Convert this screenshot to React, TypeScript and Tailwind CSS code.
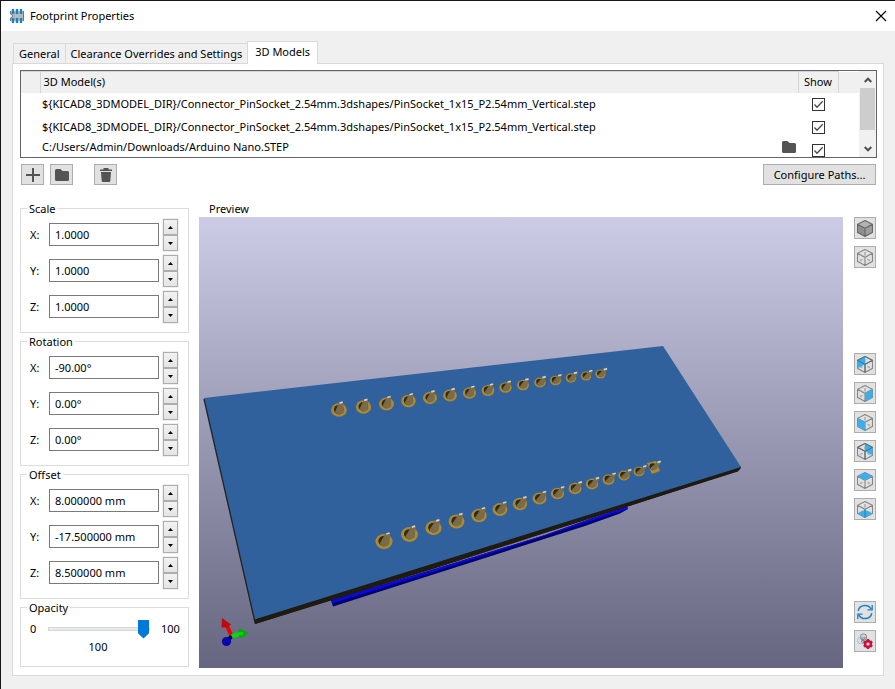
import { useState, type ReactNode } from "react";

const models = [
  { path: "${KICAD8_3DMODEL_DIR}/Connector_PinSocket_2.54mm.3dshapes/PinSocket_1x15_P2.54mm_Vertical.step", browse: false },
  { path: "${KICAD8_3DMODEL_DIR}/Connector_PinSocket_2.54mm.3dshapes/PinSocket_1x15_P2.54mm_Vertical.step", browse: false },
  { path: "C:/Users/Admin/Downloads/Arduino Nano.STEP", browse: true },
];

function FolderIcon() {
  return (
    <svg width="14" height="12" viewBox="0 0 14 12" fill="#545454" aria-hidden="true">
      <path d="M1.5 0h4L7.5 2H12.500Q14 2 14 3.500V10.500Q14 12 12.500 12H1.500Q0 12 0 10.500V1.500Q0 0 1.500 0Z" />
    </svg>
  );
}

function FootprintIcon() {
  return (
    <svg width="14" height="14" viewBox="0 0 14 14" aria-hidden="true">
      <path d="M0 2h14v10H0V9a2 2 0 0 0 0-4Z" fill="#b4b9be" />
      <path d="M.5 2v3a2 2 0 0 1 0 4v3M13.500 2v10" fill="none" stroke="#6d7378" />
      <path d="M3 0v5M7 0v5M11 0v5M3 9v5M7 9v5M11 9v5" stroke="#1a81c4" strokeWidth="2.400" />
    </svg>
  );
}

function ToolButton({ label, className, children }: { label: string; className: string; children: ReactNode }) {
  return (
    <button
      type="button"
      aria-label={label}
      className={`flex shrink-0 items-center justify-center border border-[#adadad] bg-[#e1e1e1] ${className}`}
    >
      {children}
    </button>
  );
}

function Check({ label }: { label: string }) {
  return (
    <label className="mx-auto grid size-[13px]">
      <input
        type="checkbox"
        defaultChecked
        aria-label={label}
        className="peer col-start-1 row-start-1 size-[13px] appearance-none border border-[#333] bg-white"
      />
      <svg
        viewBox="0 0 13 13"
        className="pointer-events-none invisible col-start-1 row-start-1 size-[13px] peer-checked:visible"
        fill="none"
        stroke="#4a4a4a"
        strokeWidth="1.300"
      >
        <path d="M2.500 6.500 5 9.300 10.700 3.200" />
      </svg>
    </label>
  );
}

function SpinRow({ group, axis, value }: { group: string; axis: string; value: string }) {
  const id = `${group}-${axis}`;
  const spin =
    "flex h-4 w-[15px] items-center justify-center border border-[#adadad] bg-gradient-to-b from-[#f2f2f2] to-[#e4e4e4]";
  return (
    <div className="flex h-8">
      <label htmlFor={id} className="w-[19px] leading-8">
        {axis}:
      </label>
      <input
        id={id}
        defaultValue={value}
        className="mt-1 h-[23px] w-0 min-w-0 grow border border-[#7a7a7a] bg-white px-[5px] pb-px outline-none"
      />
      <div className="ml-1 flex flex-col ring-1 ring-[#f0f0f0]">
        <button type="button" aria-label={`Increase ${group} ${axis}`} className={spin}>
          <svg width="5" height="3" viewBox="0 0 5 3">
            <path d="M0 3 2.500 0 5 3Z" />
          </svg>
        </button>
        <button type="button" aria-label={`Decrease ${group} ${axis}`} className={spin}>
          <svg width="5" height="3" viewBox="0 0 5 3">
            <path d="M0 0h5L2.500 3Z" />
          </svg>
        </button>
      </div>
    </div>
  );
}

function Group({ title, values }: { title: string; values: string[] }) {
  return (
    <fieldset className="min-w-0 border border-[#dcdcdc] pr-[10px] pb-[9px] pl-[9px]">
      <legend className="ml-[-3px] h-4 px-0.5 leading-[18px]">{title}</legend>
      <div className="flex flex-col gap-1 pt-[3px]">
        {["X", "Y", "Z"].map((axis, i) => (
          <SpinRow key={axis} group={title} axis={axis} value={values[i]} />
        ))}
      </div>
    </fieldset>
  );
}

function OpacityGroup() {
  const [opacity, setOpacity] = useState(100);
  return (
    <fieldset className="min-w-0 border border-[#dcdcdc] pr-[8px] pb-[11px] pl-[9px]">
      <legend className="ml-[-3px] h-4 px-0.5 leading-[18px]">Opacity</legend>
      <div className="flex h-6 items-center pt-[3px]">
        <span className="w-[18px]">0</span>
        <input
          type="range"
          aria-label="Opacity"
          min={0}
          max={100}
          value={opacity}
          onChange={(e) => setOpacity(Number(e.target.value))}
          className="h-[19px] w-0 min-w-0 grow appearance-none bg-transparent [&::-webkit-slider-runnable-track]:h-1 [&::-webkit-slider-runnable-track]:border [&::-webkit-slider-runnable-track]:border-[#d6d6d6] [&::-webkit-slider-runnable-track]:bg-[#e7eaea] [&::-webkit-slider-thumb]:mt-[-8px] [&::-webkit-slider-thumb]:h-[19px] [&::-webkit-slider-thumb]:w-[11px] [&::-webkit-slider-thumb]:appearance-none [&::-webkit-slider-thumb]:bg-[#0078d7] [&::-webkit-slider-thumb]:[clip-path:polygon(0_0,100%_0,100%_72%,50%_100%,0_72%)]"
        />
        <span className="w-[30px] pl-[11px]">100</span>
      </div>
      <output className="block w-[136px] text-center leading-4">{opacity}</output>
    </fieldset>
  );
}

const faces = {
  none: "",
  backLeft: "M8 .5 .5 4.300V12.300L8 8.300Z",
  right: "M8 8.300 15.500 4.300V12.300L8 16.500Z",
  left: "M8 8.300 .5 4.300V12.300L8 16.500Z",
  backRight: "M8 .5 15.500 4.300V12.300L8 8.300Z",
  top: "M8 .5 15.500 4.300 8 8.300 .5 4.300Z",
  bottom: "M8 8.800 15.500 12.300 8 16.500 .5 12.300Z",
};

function Cube({ face, shaded = false }: { face: keyof typeof faces; shaded?: boolean }) {
  return (
    <svg width="16" height="17" viewBox="0 0 16 17" fill="none" aria-hidden="true">
      {shaded && (
        <>
          <path d={faces.top} fill="#b3b3b3" />
          <path d={faces.left} fill="#8f8f8f" />
          <path d={faces.right} fill="#9d9d9d" />
        </>
      )}
      {!shaded && <path d="M8 3v3.500M3 11.700 5.500 10.300M13 11.700 10.500 10.300" stroke="#ababab" strokeWidth="1.500" />}
      <path
        d="M8 .5 15.500 4.300V12.300L8 16.500 .5 12.300V4.300ZM.5 4.300 8 8.300 15.500 4.300M8 8.300V16.500"
        stroke={shaded ? "#666" : "#868686"}
        strokeWidth="1.100"
      />
      <path d={faces[face]} fill="#39b0ec" />
      {(face === "backLeft" || face === "backRight") && (
        <path d="M8 .5 .5 4.300 8 8.300 15.500 4.300 8 .5M8 8.300V16.500" stroke="#4f6b7a" strokeWidth="1" />
      )}
      {face === "bottom" && <path d="M8 8.300V16.500" stroke="#2c81ad" strokeWidth="1" />}
    </svg>
  );
}

function RefreshIcon() {
  return (
    <svg width="16" height="16" viewBox="0 0 16 16" fill="none" stroke="#1a81c4" strokeWidth="1.500" aria-hidden="true">
      <path d="M1.200 6.800C1.800 3.600 4.600 1.400 8 1.400c2.800 0 5 1.500 6.200 3.800" />
      <path d="M14.800 9.200c-.6 3.200-3.400 5.400-6.800 5.400-2.800 0-5-1.500-6.200-3.800" />
      <path d="M15.200 1v4.800h-4.700M.8 15v-4.800h4.700" strokeWidth="1.300" />
    </svg>
  );
}

function SettingsIcon() {
  return (
    <svg width="16" height="16" viewBox="0 0 16 16" fill="none" aria-hidden="true">
      <circle cx="6.500" cy="4" r="3.200" fill="#cfcfcf" stroke="#8b8b8b" />
      <circle cx="3.800" cy="7.500" r="3.200" stroke="#86c2e4" />
      <circle cx="7.500" cy="7.500" r="3" stroke="#9a9a9a" />
      <path d="M4 5.500 8 9M8 5 4 9" stroke="#777" strokeWidth=".8" />
      <circle cx="11" cy="11" r="2.900" stroke="#c8143c" strokeWidth="2.600" fill="#f3e3e6" />
      <path
        d="M11 6v1.600M11 14.400V16M6.700 8.500l1.400.8M13.900 12.700l1.400.8M6.700 13.500l1.400-.8M13.900 9.300l1.400-.8"
        stroke="#c8143c"
        strokeWidth="2.400"
      />
    </svg>
  );
}

// Pad centres of each socket row: x, y, ring radius
const upperPins = [
  [339, 410, 7.8], [363.5, 407, 7.6], [386.500, 404, 7.4], [408.500, 401, 7.2], [430, 398, 7], [450, 395.500, 6.8],
  [469.500, 393, 6.6], [488, 390.500, 6.3], [505.500, 387.500, 6.1], [523, 385, 5.900], [540, 382.500, 5.700],
  [555.500, 380.500, 5.500], [571, 378, 5.300], [586, 376, 5.200], [600.500, 374, 5.100],
];
const lowerPins = [
  [384, 541.5, 8.6], [409.5, 534.5, 8.4], [433.5, 528, 8.1], [456.5, 521.5, 7.900], [479, 515.500, 7.700],
  [500, 509.500, 7.400], [520, 504, 7.100], [539.500, 498.500, 6.900], [557.500, 493.500, 6.600], [575, 488.500, 6.400],
  [592, 484, 6.200], [608.500, 479.500, 6], [624, 475.500, 5.700], [639, 471.500, 5.500],
];

function Pin({ x, y, r, lean, square = false }: { x: number; y: number; r: number; lean: number; square?: boolean }) {
  const tipX = x + lean;
  const tipY = y - r * 0.9;
  const top = r * 0.22;
  const base = r * 0.45;
  return (
    <g>
      {square ? (
        <path d={`M${x - 6} ${y - 4}l9-2 4 10-8 3Z`} fill="#ab8b32" />
      ) : (
        <ellipse cx={x} cy={y} rx={r} ry={r * 0.88} fill="#ab8b32" />
      )}
      <ellipse cx={x - 0.3} cy={y - 0.5} rx={r * 0.62} ry={r * 0.58} fill="#33290f" />
      <path
        d={`M${tipX - top} ${tipY}L${tipX + top} ${tipY + 0.4}L${x + base + 0.8} ${y + r * 0.35}L${x - 0.5} ${y + r * 0.6}L${x - base} ${y + r * 0.25}Z`}
        fill="#7c6b48"
        stroke="#7c6b48"
        strokeWidth="1"
      />
      <path d={`M${tipX - 1.6} ${tipY + 0.2}l3.400-1`} stroke="#ddd0b2" strokeWidth="1.700" />
    </g>
  );
}

function Preview() {
  return (
    <svg viewBox="199 217 644 451" className="block size-full" role="img" aria-label="3D preview">
      <path d="M203.500 398 254 619 740 466 741 468 738 471.500 255 624Z" fill="#1f1b10" />
      <path d="M331 600 430 570.500 545 535 590 519 627 506.500 628 509 620 513.500 585 526 333 606.500Z" fill="#00006c" />
      <path d="M331 600 430 570.500 545 535 590 519 627 506.500 628 509 585 523 430 573 332 603.500Z" fill="#0808e0" />
      <path d="M254 620.500 738 468.500 738 470.500 625 507.500 545 533 430 570 255 624Z" fill="#1f1b10" />
      <path d="M204 398 663 346 741 467 254.500 619.500Z" fill="#31619d" />
      <path d="M204 399 254.500 620" stroke="#1f2420" strokeWidth="1.300" />
      {upperPins.map(([x, y, r], i) => (
        <Pin key={x} x={x} y={y} r={r} lean={2 + i * 0.2} />
      ))}
      {lowerPins.map(([x, y, r], i) => (
        <Pin key={x} x={x} y={y} r={r} lean={3.8 + i * 0.15} />
      ))}
      <Pin x={653} y={467} r={5.4} lean={6} square />

      <path d="M231.500 636 226 643" stroke="#05055e" strokeWidth="4" />
      <circle cx="226.500" cy="641.500" r="4.600" fill="#0808a8" />
      <path d="M231 634.500 226.500 625" stroke="#ee0000" strokeWidth="4" />
      <path d="M222 618 231 624.500 227 627.500 221.500 627.500Z" fill="#bd0a0a" />
      <path d="M232 636 241 633.700" stroke="#00e000" strokeWidth="4" />
      <path d="M238.500 629 242 629.500 248.500 633 242 638 239 637.500Z" fill="#06a906" />
      <path d="M239 633.500h4" stroke="#00d800" strokeWidth="3" />
    </svg>
  );
}

const views: { label: string; face: keyof typeof faces }[] = [
  { label: "View left", face: "backLeft" },
  { label: "View right", face: "right" },
  { label: "View front", face: "left" },
  { label: "View back", face: "backRight" },
  { label: "View top", face: "top" },
  { label: "View bottom", face: "bottom" },
];

export default function App() {
  return (
    <div className="flex min-h-screen flex-col border-t border-l border-[#17171a] bg-[#f0f0f0] font-['Noto_Sans',sans-serif] text-[11px] leading-4 text-black">
      <header className="flex h-[30px] shrink-0 items-center bg-white pr-2 pl-[9px]">
        <FootprintIcon />
        <h1 className="ml-1.5 grow">Footprint Properties</h1>
        <button type="button" aria-label="Close">
          <svg width="12" height="12" viewBox="0 0 12 12" stroke="#000" strokeWidth="1.100">
            <path d="M1 1 11 11M11 1 1 11" />
          </svg>
        </button>
      </header>

      <main className="flex grow flex-col pt-2.5 pr-[11px] pb-[13px] pl-[11px]">
        <div role="tablist" className="flex items-end">
          <button type="button" role="tab" aria-selected="false" className="ml-px h-5 border border-b-0 border-[#d9d9d9] px-[5px]">
            General
          </button>
          <button type="button" role="tab" aria-selected="false" className="h-5 border border-x-0 border-b-0 border-[#d9d9d9] px-[5px]">
            Clearance Overrides and Settings
          </button>
          <button type="button" role="tab" aria-selected="true" className="z-10 -mb-px h-[23px] border border-b-0 border-[#d9d9d9] bg-white px-[7px] pb-0.5">
            3D Models
          </button>
        </div>

        <section className="flex grow flex-col border border-[#d9d9d9] bg-white pt-1.5 pr-1.5 pb-[7px] pl-[7px]">
          <div className="flex h-[88px] border border-[#646464]">
            <div className="grow overflow-hidden">
              <table className="w-full table-fixed border-collapse text-left">
                <thead>
                  <tr className="h-[21px] bg-[#f0f0f0]">
                    <th className="w-[19px] border-t border-r border-[#d4d4d4] p-0" />
                    <th className="border-t border-r border-[#d4d4d4] p-0 pl-[3px] font-normal">3D Model(s)</th>
                    <th className="w-10 border-t border-r border-[#d4d4d4] p-0 text-center font-normal">Show</th>
                    <th className="w-[21px] p-0" />
                  </tr>
                </thead>
                <tbody>
                  {models.map((m, i) => (
                    <tr key={i} className="h-[23px]">
                      <td className="p-0" />
                      <td className={m.browse ? "p-0 pl-[2px] align-top" : "p-0 pl-[2px]"}>
                        <div className="flex items-center justify-between pr-0.5">
                          <span className="whitespace-nowrap">{m.path}</span>
                          {m.browse && (
                            <button type="button" aria-label="Browse for model">
                              <FolderIcon />
                            </button>
                          )}
                        </div>
                      </td>
                      <td className="p-0">
                        <Check label={`Show model ${i + 1}`} />
                      </td>
                      <td className="p-0" />
                    </tr>
                  ))}
                </tbody>
              </table>
            </div>
            <div className="flex w-[17px] shrink-0 flex-col bg-[#f0f0f0] px-px">
              <button type="button" aria-label="Scroll up" className="flex h-[17px] shrink-0 items-center justify-center">
                <svg width="8" height="6" viewBox="0 0 8 6" fill="none" stroke="#505050" strokeWidth="2">
                  <path d="M.7 5 4 1.700 7.300 5" />
                </svg>
              </button>
              <div className="h-[42px] bg-[#cdcdcd]" />
              <button type="button" aria-label="Scroll down" className="mt-auto flex h-[17px] shrink-0 items-center justify-center">
                <svg width="8" height="6" viewBox="0 0 8 6" fill="none" stroke="#505050" strokeWidth="2">
                  <path d="M.7 1 4 4.300 7.300 1" />
                </svg>
              </button>
            </div>
          </div>

          <div className="mt-1.5 flex items-center pr-px pl-px">
            <ToolButton label="Add model" className="h-[21px] w-[23px]">
              <svg width="14" height="14" viewBox="0 0 14 14" stroke="#545454" strokeWidth="2">
                <path d="M7 0v14M0 7h14" />
              </svg>
            </ToolButton>
            <ToolButton label="Browse" className="ml-1.5 h-[21px] w-[23px]">
              <FolderIcon />
            </ToolButton>
            <ToolButton label="Remove model" className="ml-[21px] h-[21px] w-[23px]">
              <svg width="12" height="14" viewBox="0 0 12 14" fill="#545454">
                <path d="M0 1.500h3.500V0h5v1.500H12V3H0ZM1 4h10L10.300 13Q10.200 14 9.200 14H2.800Q1.800 14 1.700 13Z" />
              </svg>
            </ToolButton>
            <button type="button" className="ml-auto h-[21px] w-[113px] border border-[#adadad] bg-[#e1e1e1]">
              Configure Paths...
            </button>
          </div>

          <div className="mt-[15px] flex grow">
            <div className="flex w-[169px] shrink-0 flex-col">
              <Group title="Scale" values={["1.0000", "1.0000", "1.0000"]} />
              <Group title="Rotation" values={["-90.00°", "0.00°", "0.00°"]} />
              <Group title="Offset" values={["8.000000 mm", "-17.500000 mm", "8.500000 mm"]} />
              <OpacityGroup />
            </div>

            <div className="ml-2.5 flex grow flex-col">
              <h2 className="h-[17px] pl-2.5 leading-[18px]">Preview</h2>
              <div className="flex grow">
                <div className="grow bg-gradient-to-b from-[#cccce6] to-[#666680]">
                  <Preview />
                </div>
                <div className="flex w-[34px] shrink-0 flex-col items-end gap-[7px] pr-px">
                  <ToolButton label="Shaded" className="size-[22px]">
                    <Cube face="none" shaded />
                  </ToolButton>
                  <ToolButton label="Wireframe" className="mb-[78px] size-[22px]">
                    <Cube face="none" />
                  </ToolButton>
                  {views.map((v) => (
                    <ToolButton key={v.label} label={v.label} className="size-[22px]">
                      <Cube face={v.face} />
                    </ToolButton>
                  ))}
                  <ToolButton label="Reload" className="mt-auto size-[22px]">
                    <RefreshIcon />
                  </ToolButton>
                  <ToolButton label="Settings" className="mb-4 size-[22px]">
                    <SettingsIcon />
                  </ToolButton>
                </div>
              </div>
            </div>
          </div>
        </section>
      </main>
    </div>
  );
}
